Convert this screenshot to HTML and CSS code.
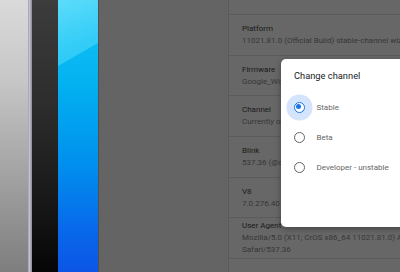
FILE: index.html
```html
<!DOCTYPE html>
<html lang="en">
<head>
<meta charset="UTF-8"><meta name="viewport" content="width=device-width,initial-scale=1.0">
<title>About Chrome OS • Channel</title>
<link rel="stylesheet" href="styles.css">
</head>
<body>
<div class="stage">
  <div class="device">
    <div class="frame"></div>
    <div class="bezel"></div>
    <div class="edge"></div>
    <div class="wall"></div>
  </div>

  <div class="window">
    <div class="side"></div>
    <div class="details">
      <div class="row top"></div>
      <div class="row"><div class="lbl">Platform</div><div class="val">11021.81.0 (Official Build) stable-channel wizpig</div></div>
      <div class="row"><div class="lbl">Firmware</div><div class="val">Google_Wizpig.7287.240.0</div></div>
      <div class="row"><div class="lbl">Channel</div><div class="val">Currently on stable</div></div>
      <div class="row"><div class="lbl">Blink</div><div class="val">537.36 (@c3a4d6b2e9f1)</div></div>
      <div class="row"><div class="lbl">V8</div><div class="val">7.0.276.40</div></div>
      <div class="row"><div class="lbl">User Agent</div><div class="val">Mozilla/5.0 (X11; CrOS x86_64 11021.81.0) AppleWebKit/537.36</div><div class="val">Safari/537.36</div></div>
      <div class="row"><div class="lbl">Command Line</div></div>
    </div>
  </div>

  <!-- channel picker dialog -->
  <div class="dialog">
    <h2>Change channel</h2>
    <label class="opt on"><span class="radio"></span>Stable</label>
    <label class="opt"><span class="radio"></span>Beta</label>
    <label class="opt"><span class="radio"></span>Developer - unstable</label>
  </div>
</div>
</body>
</html>
```
FILE: styles.css
```css
:root{--dim:#666766;--line:#5a5b5a;--blue:#1a73e8}
body{margin:0;font-family:Roboto,'Liberation Sans',sans-serif;background:var(--dim)}
.stage{position:relative;width:400px;height:272px;overflow:hidden;display:flex}

/* -------- laptop on the left ---------- */
.device{display:flex;flex:none;height:100%}
.frame{width:28px;background:linear-gradient(#dadada,#c6c6c6 30%,#929292 80%,#7e7e7e)}
.bezel{width:4px;background:linear-gradient(90deg,#9c9caa,#c4c4d2 40%,#a2a2b2 70%,#8a8a96)}
.edge{width:26px;background:linear-gradient(#3c3c3c,#2c2c2c 40%,#141414 80%,#050505)}
.wall{position:relative;width:40px;overflow:hidden;background:linear-gradient(#19c6f6,#03b2f0 30%,#0090ee 60%,#0868ea 85%,#0c55e6)}
.wall::before{content:'';position:absolute;left:0;top:0;width:40px;height:70px;background:linear-gradient(160deg,#5cdcfa,#34cdf7 60%,#26c6f6);clip-path:polygon(0 0,100% 0,100% 43px,0 66px)}

/* -------- about page, dimmed ---------- */
.window{flex:1;display:flex;border-left:1px solid #505150;background:var(--dim)}
.side{width:129px;border-right:1px solid var(--line);background:#636463}
.details{flex:1;display:flex;flex-direction:column}
.row{min-height:39.7px;flex:none;display:flex;flex-direction:column;justify-content:center;padding:0 0 0 13px;border-bottom:1px solid var(--line);font-size:8px;white-space:nowrap;overflow:hidden}
.row.top{min-height:14px;height:14px}
.lbl{color:#1a1a1a;line-height:12px}
.val{color:#363736;line-height:12px}

/* -------- dialog ---------- */
.dialog{position:absolute;left:281px;top:59px;width:140px;height:168px;box-sizing:border-box;padding:10px 0 0 13px;background:#fff;border-radius:5px;box-shadow:0 2px 6px rgba(0,0,0,.35)}
.dialog h2{margin:0 0 9px;font-size:9.3px;font-weight:400;color:#202124;line-height:14px}
.opt{display:flex;align-items:center;height:30px;font-size:8px;color:#666}
.radio{position:relative;width:11px;height:11px;box-sizing:border-box;border:1.5px solid #5f6368;border-radius:50%;margin:0 12px 0 -0.5px;flex:none;background:#fff}
.opt.on .radio{border-color:var(--blue);box-shadow:0 0 0 7.5px #d4e4fc}
.opt.on .radio::after{content:'';position:absolute;left:1.5px;top:1.5px;width:5px;height:5px;border-radius:50%;background:var(--blue)}
```
